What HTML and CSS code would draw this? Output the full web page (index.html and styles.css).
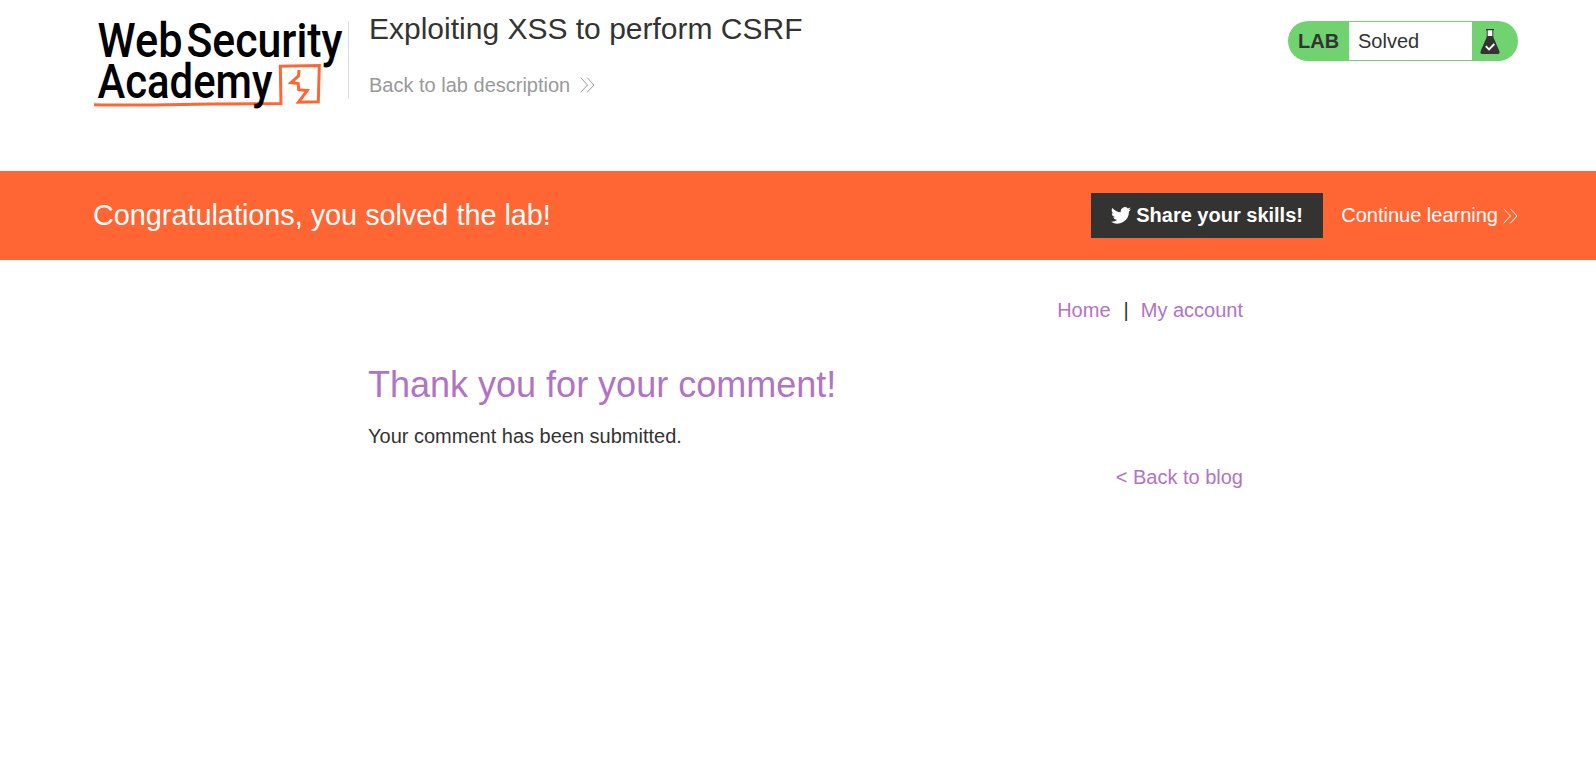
FILE: index.html
```html
<!DOCTYPE html>
<html lang="en">
<head>
<meta charset="utf-8">
<title>Exploiting XSS to perform CSRF</title>
<link rel="stylesheet" href="styles.css">
</head>
<body>
<header class="lab-header">
  <svg class="logo" width="255" height="110" viewBox="0 0 255 110" role="img" aria-label="Web Security Academy">
    <path d="M1 104.8L10 105L60 105L120 104L188 103.500L187.300 66.200L226.300 65.500L225.300 101.700L205.500 102.200L214.300 90.500L205.700 89.700L205.200 83.500L198 82.600L205.500 76L206 70" fill="none" stroke="#ff6633" stroke-width="3"/>
    <g class="logo-text">
      <text x="4.5" y="57" textLength="85" lengthAdjust="spacingAndGlyphs">Web</text>
      <text x="93.5" y="57" textLength="156" lengthAdjust="spacingAndGlyphs">Security</text>
      <text x="4.5" y="98" textLength="175" lengthAdjust="spacingAndGlyphs">Academy</text>
    </g>
  </svg>
  <div class="title-block">
    <h2 class="lab-title">Exploiting XSS to perform CSRF</h2>
    <a class="lab-back">Back to lab description
      <svg class="chevrons" width="15" height="16" viewBox="0 0 15 16"><path d="M.7.7L7.5 8L.7 15.3M7.2.7L14 8L7.2 15.3"/></svg>
    </a>
  </div>
  <div class="status">
    <span class="status-label">LAB</span>
    <span class="status-value">Solved</span>
    <span class="status-icon">
      <svg width="20" height="25" viewBox="0 0 20 25">
        <path d="M6.700 1H13.300V8L19.4 22.2Q20 24.8 18 25H2Q0 24.8.6 22.2L6.700 8Z" fill="#333332"/>
        <path d="M7.700 1H12.300V7H7.700Z" fill="#fff"/>
        <path d="M6 .7H14" stroke="#333332" stroke-width="1.2"/>
        <path d="M5.8 17.2L9 20.4L14.3 15" fill="none" stroke="#fff" stroke-width="1.8"/>
      </svg>
    </span>
  </div>
</header>
<section class="banner">
  <h4 class="banner-title">Congratulations, you solved the lab!</h4>
  <div class="banner-links">
    <a class="share">
      <svg width="20" height="17" viewBox="0 0 24 20" fill="#fff"><path d="M24 2.4a10 10 0 0 1-2.8.8A5 5 0 0 0 23.3.5a10 10 0 0 1-3.1 1.2A4.9 4.9 0 0 0 11.8 6.200A14 14 0 0 1 1.700 1a4.900 4.900 0 0 0 1.500 6.600A5 5 0 0 1 1 7v.1a5 5 0 0 0 3.900 4.800a5 5 0 0 1-2.200.1a5 5 0 0 0 4.600 3.400A10 10 0 0 1 0 17.500A14 14 0 0 0 21.500 5.100A10 10 0 0 0 24 2.400Z"/></svg>
      <span class="share-text">Share your skills!</span>
    </a>
    <a class="continue"><span class="continue-text">Continue learning</span>
      <svg class="chevrons" width="15" height="16" viewBox="0 0 15 16"><path d="M.7.7L7.5 8L.7 15.3M7.2.7L14 8L7.2 15.3"/></svg>
    </a>
  </div>
</section>
<main class="content">
  <nav class="nav"><a>Home</a><span class="divider">|</span><a>My account</a></nav>
  <h1 class="heading">Thank you for your comment!</h1>
  <p class="message">Your comment has been submitted.</p>
  <a class="blog-link">&lt; Back to blog</a>
</main>
</body>
</html>
```
FILE: styles.css
```css
* { box-sizing: border-box; }
body {
  margin: 0;
  background: #fff;
  color: #333332;
  font: 20px/24px "Liberation Sans", Arial, sans-serif;
}
h1, h2, h4, p { margin: 0; font-weight: 400; }
svg { display: block; flex: none; }
.lab-header {
  display: flex;
  align-items: flex-start;
  height: 171px;
  padding: 0 78px 0 93px;
}
.logo { overflow: visible; }
.logo-text {
  font: 500 48px Roboto, sans-serif;
  fill: #000;
}
.title-block {
  flex: 1;
  height: 78px;
  margin-top: 21px;
  padding-left: 20px;
  border-left: 1px solid #ddd;
}
.lab-title {
  margin-top: -10px;
  font-size: 30px;
  line-height: 36px;
  white-space: nowrap;
}
.lab-back {
  display: flex;
  align-items: center;
  gap: 10px;
  margin-top: 26px;
  color: #999;
}
.chevrons {
  fill: none;
  stroke: currentColor;
  stroke-width: 1;
}
.status {
  display: flex;
  width: 230px;
  height: 40px;
  margin-top: 21px;
  border-radius: 20px;
  overflow: hidden;
  background: #70d370;
  line-height: 40px;
}
.status-label {
  width: 61px;
  padding-left: 10px;
  font-weight: 700;
}
.status-value {
  width: 123px;
  height: 38px;
  margin-top: 1px;
  padding-left: 9px;
  background: #fff;
  line-height: 38px;
}
.status-icon { padding: 8px 0 0 8px; }
.banner {
  display: flex;
  align-items: center;
  justify-content: space-between;
  height: 89px;
  padding: 0 78px 0 93px;
  background: #ff6633;
  color: #fff;
}
.banner-title {
  padding-bottom: 2px;
  font-size: 28.8px;
  line-height: 34px;
}
.banner-links { display: flex; align-items: center; gap: 18px; }
.share {
  display: flex;
  align-items: center;
  gap: 5px;
  width: 232px;
  height: 45px;
  padding-left: 20px;
  background: #333332;
  font-weight: 700;
}
.share-text, .continue-text { padding-bottom: 2px; }
.continue { display: flex; align-items: center; gap: 5px; }
.content {
  display: flex;
  flex-direction: column;
  width: 875px;
  margin-left: 368px;
  padding-top: 38px;
}
.nav { display: flex; justify-content: flex-end; color: #b074c4; }
.divider { margin: 0 12px 0 13px; color: #333332; }
.heading {
  margin-top: 41px;
  color: #b074c4;
  font-size: 36px;
  line-height: 44px;
}
.message { margin-top: 17px; }
.blog-link { align-self: flex-end; margin-top: 17px; color: #b074c4; }
```
